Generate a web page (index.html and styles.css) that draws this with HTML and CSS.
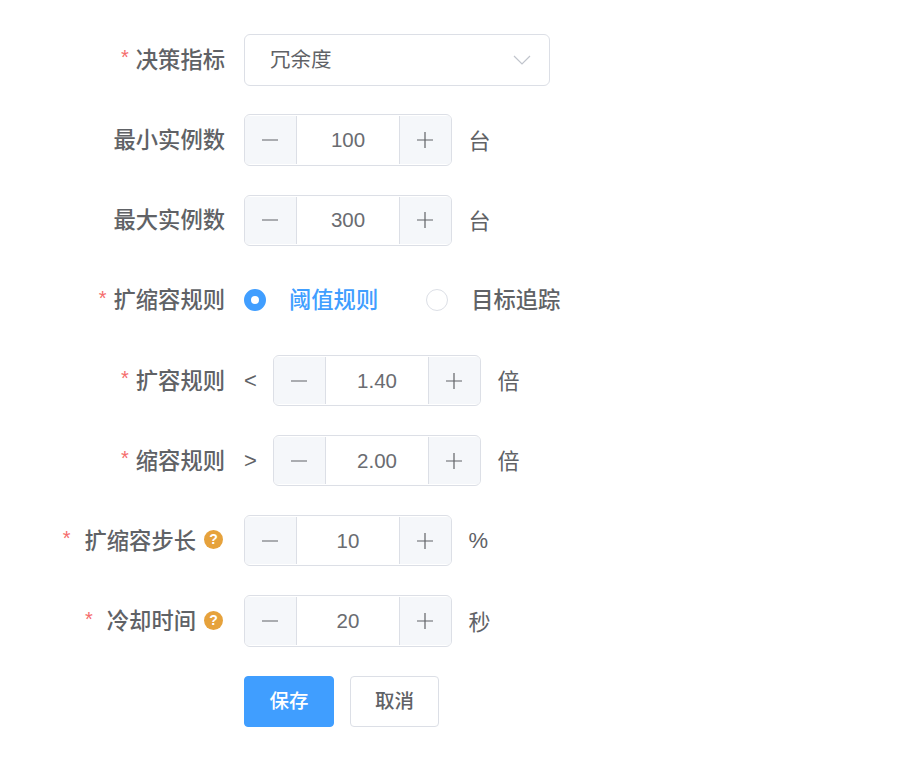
FILE: index.html
```html
<!DOCTYPE html>
<html lang="zh-CN">
<head>
    <meta charset="UTF-8">
    <meta name="viewport" content="width=device-width, initial-scale=1.0">
    <title>弹性伸缩配置</title>
    <link rel="stylesheet" href="styles.css">
</head>
<body>
    <form class="form">
        <div class="form-item">
            <label class="form-label"><span class="required">*</span>决策指标</label>
            <div class="form-content">
                <div class="select">
                    <span class="select-text">冗余度</span>
                    <svg class="select-arrow" width="18" height="10" viewBox="0 0 18 10"><path d="M1 1l8 8 8-8" fill="none" stroke="#c0c4cc" stroke-width="1.2"/></svg>
                </div>
            </div>
        </div>

        <div class="form-item">
            <label class="form-label">最小实例数</label>
            <div class="form-content">
                <div class="number-input">
                    <span class="step step-minus"><svg width="16" height="16" viewBox="0 0 16 16"><path d="M0 8h16" stroke="#606266" stroke-width="1.2"/></svg></span>
                    <span class="number-value">100</span>
                    <span class="step step-plus"><svg width="16" height="16" viewBox="0 0 16 16"><path d="M0 8h16M8 0v16" stroke="#606266" stroke-width="1.2"/></svg></span>
                </div>
                <span class="unit">台</span>
            </div>
        </div>

        <div class="form-item">
            <label class="form-label">最大实例数</label>
            <div class="form-content">
                <div class="number-input">
                    <span class="step step-minus"><svg width="16" height="16" viewBox="0 0 16 16"><path d="M0 8h16" stroke="#606266" stroke-width="1.2"/></svg></span>
                    <span class="number-value">300</span>
                    <span class="step step-plus"><svg width="16" height="16" viewBox="0 0 16 16"><path d="M0 8h16M8 0v16" stroke="#606266" stroke-width="1.2"/></svg></span>
                </div>
                <span class="unit">台</span>
            </div>
        </div>

        <div class="form-item">
            <label class="form-label"><span class="required">*</span>扩缩容规则</label>
            <div class="form-content">
                <div class="radio radio-checked">
                    <span class="radio-circle"></span>
                    <span class="radio-text">阈值规则</span>
                </div>
                <div class="radio">
                    <span class="radio-circle"></span>
                    <span class="radio-text">目标追踪</span>
                </div>
            </div>
        </div>

        <div class="form-item">
            <label class="form-label"><span class="required">*</span>扩容规则</label>
            <div class="form-content">
                <span class="prefix">&lt;</span>
                <div class="number-input">
                    <span class="step step-minus"><svg width="16" height="16" viewBox="0 0 16 16"><path d="M0 8h16" stroke="#606266" stroke-width="1.2"/></svg></span>
                    <span class="number-value">1.40</span>
                    <span class="step step-plus"><svg width="16" height="16" viewBox="0 0 16 16"><path d="M0 8h16M8 0v16" stroke="#606266" stroke-width="1.2"/></svg></span>
                </div>
                <span class="unit">倍</span>
            </div>
        </div>

        <div class="form-item">
            <label class="form-label"><span class="required">*</span>缩容规则</label>
            <div class="form-content">
                <span class="prefix">&gt;</span>
                <div class="number-input">
                    <span class="step step-minus"><svg width="16" height="16" viewBox="0 0 16 16"><path d="M0 8h16" stroke="#606266" stroke-width="1.2"/></svg></span>
                    <span class="number-value">2.00</span>
                    <span class="step step-plus"><svg width="16" height="16" viewBox="0 0 16 16"><path d="M0 8h16M8 0v16" stroke="#606266" stroke-width="1.2"/></svg></span>
                </div>
                <span class="unit">倍</span>
            </div>
        </div>

        <div class="form-item">
            <label class="form-label"><span class="required required-wide">*</span>扩缩容步长<span class="help">?</span></label>
            <div class="form-content">
                <div class="number-input">
                    <span class="step step-minus"><svg width="16" height="16" viewBox="0 0 16 16"><path d="M0 8h16" stroke="#606266" stroke-width="1.2"/></svg></span>
                    <span class="number-value">10</span>
                    <span class="step step-plus"><svg width="16" height="16" viewBox="0 0 16 16"><path d="M0 8h16M8 0v16" stroke="#606266" stroke-width="1.2"/></svg></span>
                </div>
                <span class="unit unit-percent">%</span>
            </div>
        </div>

        <div class="form-item">
            <label class="form-label"><span class="required required-wide">*</span>冷却时间<span class="help">?</span></label>
            <div class="form-content">
                <div class="number-input">
                    <span class="step step-minus"><svg width="16" height="16" viewBox="0 0 16 16"><path d="M0 8h16" stroke="#606266" stroke-width="1.2"/></svg></span>
                    <span class="number-value">20</span>
                    <span class="step step-plus"><svg width="16" height="16" viewBox="0 0 16 16"><path d="M0 8h16M8 0v16" stroke="#606266" stroke-width="1.2"/></svg></span>
                </div>
                <span class="unit">秒</span>
            </div>
        </div>

        <div class="form-item">
            <div class="form-label"></div>
            <div class="form-content">
                <button type="button" class="btn btn-primary">保存</button>
                <button type="button" class="btn">取消</button>
            </div>
        </div>
    </form>
</body>
</html>
```

FILE: styles.css
```css
/* Base */
body {
    margin: 0;
    background-color: #ffffff;
    color: #606266;
    font-family: "Liberation Sans", "Noto Sans CJK SC", sans-serif;
}

/* Form rows */
.form {
    padding-top: 34.32px;
}

.form-item {
    display: flex;
    height: 51.2px;
    margin-bottom: 28.97px;
}

.form-label {
    width: 225px;
    height: 100%;
    box-sizing: border-box;
    margin-right: 19px;
    padding-bottom: 4px;
    display: flex;
    align-items: center;
    justify-content: flex-end;
    font-size: 22.3px;
    font-weight: 500;
    font-family: "Noto Sans CJK SC", sans-serif;
}

.form-content {
    display: flex;
    align-items: center;
    font-size: 20.5px;
}

.required {
    color: #f56c6c;
    margin-right: 7px;
    font-size: 20px;
    font-family: "Liberation Sans", sans-serif;
}

.required-wide {
    margin-right: 14px;
}

.help {
    width: 19px;
    height: 19px;
    margin: 2px 2px 0 8px;
    border-radius: 50%;
    background-color: #e6a23c;
    color: #ffffff;
    font-size: 14px;
    font-weight: 700;
    line-height: 19px;
    text-align: center;
    font-family: "Liberation Sans", sans-serif;
}

/* Select */
.select {
    width: 306px;
    height: 51.2px;
    box-sizing: border-box;
    padding: 0 18px 0 25px;
    display: flex;
    align-items: center;
    justify-content: space-between;
    border: 1px solid #dcdfe6;
    border-radius: 6px;
    font-family: "Noto Sans CJK SC", sans-serif;
}

.select-text {
    padding-bottom: 4px;
}

/* Number input */
.number-input {
    width: 208px;
    height: 51.2px;
    box-sizing: border-box;
    display: flex;
    border: 1px solid #dcdfe6;
    border-radius: 6px;
    overflow: hidden;
}

.step {
    width: 52px;
    margin: 1px 0;
    box-sizing: border-box;
    display: flex;
    align-items: center;
    justify-content: center;
    background-color: #f5f7fa;
}

.step svg {
    margin-right: 1px;
}

.step-minus {
    border-right: 1px solid #dcdfe6;
}

.step-plus {
    border-left: 1px solid #dcdfe6;
}

.number-value {
    flex: 1;
    display: flex;
    align-items: center;
    justify-content: center;
    color: #6a6c71;
}

.prefix {
    width: 29px;
    font-size: 22px;
}

.unit {
    margin-left: 16.5px;
    padding-bottom: 3px;
    font-size: 22px;
}

.unit-percent {
    padding-bottom: 0;
}

/* Radio */
.radio {
    display: flex;
    align-items: center;
    margin-right: 48px;
    font-size: 22.3px;
    font-weight: 500;
    font-family: "Noto Sans CJK SC", sans-serif;
}

.radio-circle {
    width: 22px;
    height: 22px;
    box-sizing: border-box;
    margin-right: 23px;
    border: 1px solid #dcdfe6;
    border-radius: 50%;
}

.radio-text {
    padding-bottom: 4px;
}

.radio-checked {
    color: #409eff;
}

.radio-checked .radio-circle {
    border: 7px solid #409eff;
}

/* Buttons */
.btn {
    width: 89px;
    height: 51.2px;
    margin-right: 16px;
    padding: 0 0 4px;
    background-color: #ffffff;
    border: 1px solid #dcdfe6;
    border-radius: 4px;
    color: #606266;
    font-size: 19.5px;
    font-weight: 500;
    font-family: "Noto Sans CJK SC", sans-serif;
}

.btn-primary {
    width: 90px;
    background-color: #409eff;
    border-color: #409eff;
    color: #ffffff;
}
```
